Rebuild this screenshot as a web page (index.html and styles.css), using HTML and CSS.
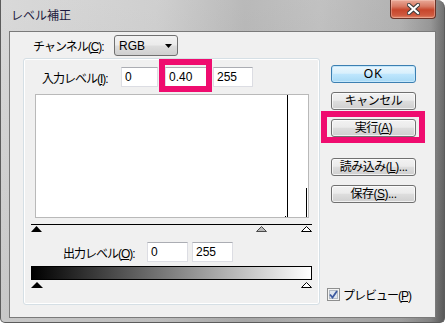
FILE: index.html
```html
<!DOCTYPE html>
<html lang="ja">
<head>
    <meta charset="UTF-8">
    <title>レベル補正</title>
    <link rel="stylesheet" href="styles.css">
</head>
<body>
    <div class="window">
        <div class="titlebar">
            <span class="title">レベル補正</span>
            <div class="close">
                <svg width="13" height="12" viewBox="0 0 13 12">
                    <path d="M2 2 L11 10 M11 2 L2 10" stroke="#3a3a3a" stroke-width="4.2" stroke-linecap="square" fill="none"/>
                    <path d="M2 2 L11 10 M11 2 L2 10" stroke="#fff" stroke-width="2.2" stroke-linecap="square" fill="none"/>
                </svg>
            </div>
        </div>

        <div class="client">
            <!-- left: channel + levels panel -->
            <div class="main">
                <div class="channel-row">
                    <span class="lbl">チャンネル(<u>C</u>):</span>
                    <div class="select">
                        <span>RGB</span>
                        <svg width="7" height="4" viewBox="0 0 7 4"><polygon points="0,0 7,0 3.5,4" fill="#000"/></svg>
                    </div>
                </div>

                <div class="panel">
                    <div class="level-row in-row">
                        <span class="lbl">入力レベル(<u>I</u>):</span>
                        <span class="field w37">0</span>
                        <span class="field w42 marked">0.40<span class="hl hl-field"></span></span>
                        <span class="field w40">255</span>
                    </div>

                    <div class="histogram">
                        <svg width="272" height="122" viewBox="0 0 272 122" shape-rendering="crispEdges">
                            <rect x="251" y="0" width="1" height="122" fill="#000"/>
                            <rect x="270" y="93" width="1" height="29" fill="#000"/>
                            <rect x="249" y="121" width="1" height="1" fill="#000"/>
                        </svg>
                    </div>

                    <div class="slider track">
                        <svg class="thumb" style="left: 0px" width="11" height="6" viewBox="0 0 11 6"><polygon points="5.5,0 11,6 0,6" fill="#000"/></svg>
                        <svg class="thumb" style="left: 225px" width="11" height="6" viewBox="0 0 11 6"><polygon points="5.5,0.5 10.5,5.5 0.5,5.5" fill="#b8b8b8" stroke="#4a4a4a"/></svg>
                        <svg class="thumb" style="left: 270px" width="11" height="6" viewBox="0 0 11 6"><polygon points="5.5,0.5 10.5,5.5 0.5,5.5" fill="#fff" stroke="#000"/></svg>
                    </div>

                    <div class="level-row out-row">
                        <span class="lbl">出力レベル(<u>O</u>):</span>
                        <span class="field w41">0</span>
                        <span class="field w41">255</span>
                    </div>

                    <div class="ramp"></div>

                    <div class="slider">
                        <svg class="thumb" style="left: 0px" width="12" height="6" viewBox="0 0 12 6"><polygon points="6,0 12,6 0,6" fill="#000"/></svg>
                        <svg class="thumb" style="left: 270px" width="11" height="6" viewBox="0 0 11 6"><polygon points="5.5,0.5 10.5,5.5 0.5,5.5" fill="#fff" stroke="#000"/></svg>
                    </div>
                </div>
            </div>

            <!-- right: buttons -->
            <div class="side">
                <div class="btn default">OK</div>
                <div class="btn">キャンセル</div>
                <div class="btn marked">実行(<u>A</u>)<span class="hl hl-btn"></span></div>
                <div class="btn gap">読み込み(<u>L</u>)...</div>
                <div class="btn">保存(<u>S</u>)...</div>

                <label class="check">
                    <svg width="13" height="13" viewBox="0 0 13 13">
                        <rect x="0.5" y="0.5" width="12" height="12" fill="#f4f4f4" stroke="#8e8f8f"/>
                        <rect x="2.5" y="2.5" width="8" height="8" fill="#dfe6ee" stroke="#b4bcc6"/>
                        <path d="M3 6.5 L5.5 9.5 L10 3" stroke="#3d5aa0" stroke-width="1.8" fill="none"/>
                    </svg>
                    <span class="lbl">プレビュー(<u>P</u>)</span>
                </label>
            </div>
        </div>
    </div>
</body>
</html>
```

FILE: styles.css
```css
* {
    margin: 0;
    padding: 0;
    box-sizing: border-box;
}

body {
    background: #fff;
    font-family: "Liberation Sans", "Noto Sans CJK JP", sans-serif;
    font-size: 12px;
    color: #000;
}

u {
    text-decoration: underline;
    text-underline-offset: 1px;
}

.lbl {
    white-space: nowrap;
    letter-spacing: -1px;
}

.window {
    width: 445px;
    height: 323px;
    border: 1px solid #5c5c5c;
    border-top: none;
    border-radius: 0 8px 5px 5px;
    background:
        linear-gradient(to bottom, rgba(255, 255, 255, 0.12), rgba(0, 0, 0, 0.06)),
        linear-gradient(to right, #d4d4d4 0%, #c9c9c9 35%, #b0b0b0 55%, #b9b9b9 72%, #a8a8a8 90%, #8a8a8a 97%, #5e5e5e 100%);
}

.titlebar {
    height: 31px;
    display: flex;
    justify-content: space-between;
    align-items: flex-start;
}

.title {
    margin: 8px 0 0 10px;
    line-height: 14px;
    font-family: "Noto Sans CJK JP", sans-serif;
    color: #1c1a3e;
}

.close {
    width: 46px;
    height: 19px;
    margin-right: 8px;
    border: 1px solid #6a3328;
    border-top: none;
    border-radius: 0 0 4px 4px;
    background: linear-gradient(to bottom, #e9a998 0%, #d87a64 35%, #c7462c 55%, #cf5a3f 85%, #e08a6e 100%);
    box-shadow: inset 0 0 0 1px rgba(255, 220, 210, 0.35);
    display: flex;
    align-items: center;
    justify-content: center;
}

/* client area */
.client {
    margin-left: 8px;
    width: 427px;
    height: 287px;
    border: 1px solid #7a7a7a;
    background: #f0f0f0;
    display: flex;
}

.main {
    width: 310px;
    padding-left: 13px;
}

.channel-row {
    display: flex;
    align-items: center;
    height: 21px;
    margin: 3px 0 0 10px;
}

.channel-row .lbl {
    width: 81px;
}

.select {
    width: 64px;
    height: 21px;
    border: 1px solid #707070;
    border-radius: 3px;
    background: linear-gradient(to bottom, #f2f2f2, #ebebeb 48%, #dddddd 52%, #cfcfcf);
    display: flex;
    align-items: center;
    justify-content: space-between;
    padding: 0 5px 0 4px;
}

.panel {
    margin-top: 2px;
    width: 297px;
    height: 247px;
    border: 1px solid #d5dfe5;
    border-radius: 3px;
    box-shadow: inset 0 0 0 1px #fff;
}

.level-row {
    display: flex;
    align-items: center;
    height: 20px;
}

.in-row {
    margin-top: 8px;
    padding-left: 18px;
}

.in-row .lbl {
    width: 79px;
}

.out-row {
    margin-top: 10px;
    padding-left: 39px;
    gap: 4px;
}

.out-row .lbl {
    width: 80px;
}

.field {
    height: 20px;
    background: #fff;
    border: 1px solid #dcdde3;
    border-top-color: #abadb3;
    padding-left: 3px;
    line-height: 18px;
}

.w37 { width: 37px; }
.w40 { width: 40px; }
.w41 { width: 41px; }
.w42 { width: 42px; margin: 0 6px 0 7px; }

.marked {
    position: relative;
}

.hl {
    position: absolute;
    border: 6px solid #ef0c6f;
}

.hl-field {
    left: -7px;
    top: -9px;
    width: 53px;
    height: 33px;
}

.hl-btn {
    left: -11px;
    top: -9px;
    width: 104px;
    height: 32px;
}

.histogram {
    margin: 7px 0 0 11px;
    width: 274px;
    height: 124px;
    border: 1px solid #b9b9b9;
    background: #fff;
}

.histogram svg {
    display: block;
}

.slider {
    position: relative;
    margin-left: 7px;
    width: 281px;
    height: 8px;
}

.slider.track {
    margin-top: 6px;
    border-top: 1px solid #000;
}

.thumb {
    position: absolute;
    top: 1px;
    display: block;
}

.ramp {
    margin: 4px 0 0 7px;
    width: 281px;
    height: 14px;
    border: 1px solid #000;
    background: linear-gradient(to right, #000, #fff);
}

.ramp + .slider {
    margin-top: 1px;
}

/* right column */
.side {
    width: 108px;
    margin-left: 7px;
    padding: 33px 0 16px;
    display: flex;
    flex-direction: column;
}

.btn {
    width: 85px;
    height: 18px;
    margin: 0 0 9px 4px;
    border: 1px solid #707070;
    border-radius: 3px;
    background: linear-gradient(to bottom, #f2f2f2, #ebebeb 45%, #dddddd 52%, #cfcfcf);
    box-shadow: inset 0 0 0 1px rgba(255, 255, 255, 0.7);
    text-align: center;
    line-height: 16px;
    white-space: nowrap;
    letter-spacing: -0.5px;
}

.btn.default {
    border-color: #3c7fb1;
    background: linear-gradient(to bottom, #eaf6fd, #d9f0fc 45%, #bee6fd 52%, #a7d9f5);
    box-shadow: inset 0 0 0 1px #c4e7fb;
    letter-spacing: 1px;
}

.btn.gap {
    margin-top: 12px;
}

.check {
    margin-top: auto;
    display: flex;
    align-items: center;
    gap: 3px;
    height: 13px;
}

.check svg {
    display: block;
}
```
